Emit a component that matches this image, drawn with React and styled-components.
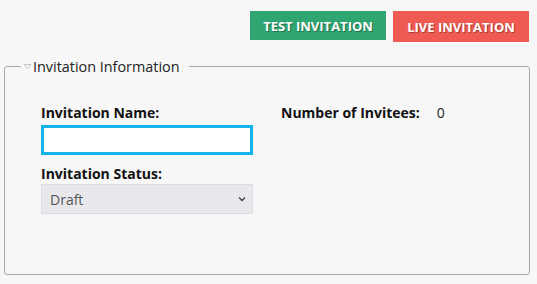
import React from 'react';
import styled, { createGlobalStyle } from 'styled-components';

const GlobalStyle = createGlobalStyle`
  html, body {
    margin: 0;
    padding: 0;
    background: #f7f7f7;
    font-family: "Open Sans", "Liberation Sans", sans-serif;
    color: #222;
  }
`;

const Page = styled.div`
  width: 537px;
  height: 284px;
  box-sizing: border-box;
  padding: 11px 8px 0 4px;
`;

const Toolbar = styled.div`
  display: flex;
  justify-content: flex-end;
  align-items: flex-start;
  gap: 7px;
  height: 46px;
`;

const ActionButton = styled.button`
  border: none;
  margin: 0;
  padding: 0;
  width: 136px;
  height: ${p => (p.tall ? '31px' : '29px')};
  background: ${p => p.bg};
  color: #fff;
  font-family: "Open Sans", "Liberation Sans", sans-serif;
  font-weight: 700;
  font-size: 13px;
  text-shadow: 1px 1px 1px rgba(0, 0, 0, 0.35);
  cursor: pointer;
`;

const Fieldset = styled.fieldset`
  margin: 0;
  border: 1px solid #aaa;
  border-radius: 3px;
  padding: 0;
  height: 218px;
  box-sizing: border-box;
  width: 526px;
`;

const Legend = styled.legend`
  margin-left: 16px;
  padding: 0 9px 0 2px;
  font-size: 14.4px;
  color: #222;
  display: flex;
  align-items: center;
  gap: 1px;
`;

const Body = styled.div`
  padding: 28px 0 0 36px;
  display: grid;
  grid-template-columns: 212px auto;
  column-gap: 28px;
`;

const Column = styled.div`
  display: flex;
  flex-direction: column;
`;

const Label = styled.label`
  font-weight: 700;
  font-size: 14px;
  line-height: 18px;
  color: #111;
  margin-bottom: ${p => p.gap || 3}px;
`;

const TextInput = styled.input`
  box-sizing: border-box;
  width: 212px;
  height: 30px;
  border: 3px solid #13b4ea;
  background: #fff;
  outline: none;
  margin: 0 0 10px 0;
`;

const SelectBox = styled.div`
  box-sizing: border-box;
  width: 212px;
  height: 30px;
  background: #e8e8ec;
  border: 1px solid #dcdce0;
  display: flex;
  align-items: center;
  justify-content: space-between;
  padding: 0 6px 0 8px;
  font-size: 14px;
  color: #555;
`;

const InfoRow = styled.div`
  display: flex;
  gap: 17px;
  font-size: 14px;
  line-height: 18px;
`;

const InfoLabel = styled.span`
  font-weight: 700;
  color: #111;
`;

const Caret = () => (
  <svg width="9" height="7" viewBox="0 0 9 7">
    <path d="M1 1.5 L8 1.5 L4.5 5.5 Z" fill="none" stroke="#c4c4c4" strokeWidth="1" />
  </svg>
);

const Chevron = () => (
  <svg width="8" height="6" viewBox="0 0 8 6">
    <path d="M1 1.5 L4 4.5 L7 1.5" fill="none" stroke="#444" strokeWidth="1.4" />
  </svg>
);

export default function App() {
  return (
    <Page>
      <GlobalStyle />
      <Toolbar>
        <ActionButton bg="#2fa672">TEST INVITATION</ActionButton>
        <ActionButton bg="#ef5a53" tall>LIVE INVITATION</ActionButton>
      </Toolbar>
      <Fieldset>
        <Legend><Caret />Invitation Information</Legend>
        <Body>
          <Column>
            <Label>Invitation Name:</Label>
            <TextInput type="text" />
            <Label gap={1}>Invitation Status:</Label>
            <SelectBox>Draft<Chevron /></SelectBox>
          </Column>
          <InfoRow>
            <InfoLabel>Number of Invitees:</InfoLabel>
            <span>0</span>
          </InfoRow>
        </Body>
      </Fieldset>
    </Page>
  );
}
